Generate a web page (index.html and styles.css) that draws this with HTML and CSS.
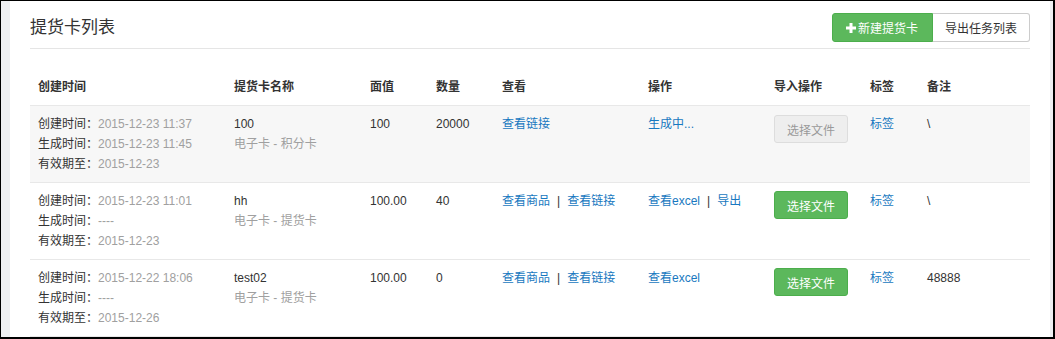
FILE: index.html
```html
<!DOCTYPE html>
<html lang="zh-CN">
<head>
  <meta charset="UTF-8">
  <title>提货卡列表</title>
  <link rel="stylesheet" href="styles.css">
</head>
<body>
  <div class="panel">
    <div class="panel-header">
      <h2>提货卡列表</h2>
      <div class="btn-group">
        <button class="btn btn-green">
          <svg class="plus" width="10" height="10" viewBox="0 0 10 10"><rect x="3.5" y="0" width="3" height="10" fill="#fff"/><rect x="0" y="3.5" width="10" height="3" fill="#fff"/></svg>新建提货卡
        </button>
        <button class="btn btn-white">导出任务列表</button>
      </div>
    </div>

    <table class="table">
      <colgroup>
        <col style="width:196px">
        <col style="width:136px">
        <col style="width:66px">
        <col style="width:66px">
        <col style="width:146px">
        <col style="width:126px">
        <col style="width:96px">
        <col style="width:57px">
        <col style="width:111px">
      </colgroup>
      <thead>
        <tr>
          <th>创建时间</th>
          <th>提货卡名称</th>
          <th>面值</th>
          <th>数量</th>
          <th>查看</th>
          <th>操作</th>
          <th>导入操作</th>
          <th>标签</th>
          <th>备注</th>
        </tr>
      </thead>
      <tbody>
        <tr class="shaded">
          <td>
            <div>创建时间：<span class="muted">2015-12-23 11:37</span></div>
            <div>生成时间：<span class="muted">2015-12-23 11:45</span></div>
            <div>有效期至：<span class="muted">2015-12-23</span></div>
          </td>
          <td>
            <div>100</div>
            <div class="muted">电子卡 - 积分卡</div>
          </td>
          <td>100</td>
          <td>20000</td>
          <td><a href="#">查看链接</a></td>
          <td><a href="#">生成中...</a></td>
          <td><button class="btn-file disabled">选择文件</button></td>
          <td><a href="#">标签</a></td>
          <td>\</td>
        </tr>
        <tr>
          <td>
            <div>创建时间：<span class="muted">2015-12-23 11:01</span></div>
            <div>生成时间：<span class="muted">----</span></div>
            <div>有效期至：<span class="muted">2015-12-23</span></div>
          </td>
          <td>
            <div>hh</div>
            <div class="muted">电子卡 - 提货卡</div>
          </td>
          <td>100.00</td>
          <td>40</td>
          <td><a href="#">查看商品</a><span class="sep">|</span><a href="#">查看链接</a></td>
          <td><a href="#">查看excel</a><span class="sep">|</span><a href="#">导出</a></td>
          <td><button class="btn-file">选择文件</button></td>
          <td><a href="#">标签</a></td>
          <td>\</td>
        </tr>
        <tr>
          <td>
            <div>创建时间：<span class="muted">2015-12-22 18:06</span></div>
            <div>生成时间：<span class="muted">----</span></div>
            <div>有效期至：<span class="muted">2015-12-26</span></div>
          </td>
          <td>
            <div>test02</div>
            <div class="muted">电子卡 - 提货卡</div>
          </td>
          <td>100.00</td>
          <td>0</td>
          <td><a href="#">查看商品</a><span class="sep">|</span><a href="#">查看链接</a></td>
          <td><a href="#">查看excel</a></td>
          <td><button class="btn-file">选择文件</button></td>
          <td><a href="#">标签</a></td>
          <td>48888</td>
        </tr>
      </tbody>
    </table>
  </div>
</body>
</html>
```

FILE: styles.css
```css
html, body {
  height: 100%;
}

body {
  margin: 0;
  box-sizing: border-box;
  border: 1px solid #000;
  border-right-width: 2px;
  border-bottom-width: 2px;
  background-color: #eff0f3;
  font-family: "Liberation Sans", "Noto Sans CJK SC", sans-serif;
  font-size: 12px;
  line-height: 20px;
  color: #333;
  overflow: hidden;
}

.panel {
  height: 100%;
  margin: 0 3px 0 9px;
  padding: 0 20px;
  background-color: #fff;
  overflow: hidden;
}

.panel-header {
  display: flex;
  align-items: center;
  justify-content: space-between;
  padding: 12px 0 6px;
  border-bottom: 1px solid #e5e5e5;
}

.panel-header h2 {
  margin: 0;
  font-size: 17px;
  font-weight: normal;
  color: #333;
}

.btn-group {
  display: flex;
}

.btn {
  height: 29px;
  padding: 0 12px;
  font-family: inherit;
  font-size: 12px;
  border: 1px solid #ccc;
  cursor: pointer;
  display: flex;
  align-items: center;
}

.btn-green {
  padding: 0 14px 0 13px;
  background-color: #5cb85c;
  border-color: #4cae4c;
  color: #fff;
  border-radius: 3px 0 0 3px;
}

.btn-green .plus {
  margin-right: 2px;
}

.btn-white {
  background-color: #fff;
  color: #333;
  border-left: none;
  border-radius: 0 3px 3px 0;
}

.table {
  width: 100%;
  table-layout: fixed;
  border-collapse: collapse;
  margin-top: 20px;
  border-bottom: 1px solid #e8e8e8;
}

.table th, .table td {
  padding: 8px;
  text-align: left;
  vertical-align: top;
}

.table th {
  font-weight: bold;
  color: #333;
}

.table td {
  border-top: 1px solid #e8e8e8;
}

.table tr.shaded td {
  background-color: #f7f7f7;
}

.muted {
  color: #a0a0a0;
}

a {
  color: #1878c0;
  text-decoration: none;
}

.sep {
  padding: 0 7px;
  color: #333;
}

.btn-file {
  display: block;
  width: 74px;
  height: 28px;
  padding: 0;
  font-family: inherit;
  font-size: 12px;
  color: #fff;
  background-color: #5cb85c;
  border: 1px solid #4cae4c;
  border-radius: 3px;
  cursor: pointer;
}

.btn-file.disabled {
  margin-top: 1px;
  color: #999;
  background-color: #eee;
  border-color: #ddd;
}
```
